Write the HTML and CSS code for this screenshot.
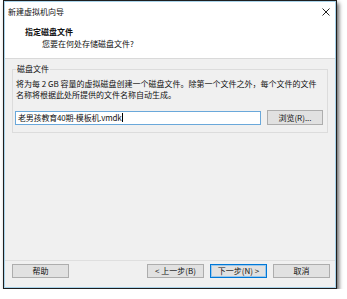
FILE: index.html
```html
<!DOCTYPE html>
<html lang="zh-CN">
<head>
  <meta charset="UTF-8">
  <title>新建虚拟机向导</title>
  <link rel="stylesheet" href="styles.css">
</head>
<body>
  <div class="window">
    <div class="inner">
      <div class="titlebar">
        <span class="title">新建虚拟机向导</span>
        <svg class="close" width="8" height="8" viewBox="0 0 8 8">
          <path d="M0.5 0.5 L7.5 7.5 M7.5 0.5 L0.5 7.5" stroke="#222" stroke-width="1" fill="none"/>
        </svg>
      </div>

      <div class="header">
        <div class="header-title">指定磁盘文件</div>
        <div class="header-sub">您要在何处存储磁盘文件?</div>
      </div>

      <div class="body">
        <fieldset class="group">
          <legend>磁盘文件</legend>
          <p class="desc">将为每 2 GB 容量的虚拟磁盘创建一个磁盘文件。除第一个文件之外，每个文件的文件<br>名称将根据此处所提供的文件名称自动生成。</p>
          <div class="file-row">
            <div class="input"><span class="value">老男孩教育40期-模板机.vmdk</span><span class="caret"></span></div>
            <button class="btn browse">浏览(R)...</button>
          </div>
        </fieldset>
      </div>

      <div class="footer">
        <button class="btn">帮助</button>
        <div class="nav">
          <button class="btn">&lt; 上一步(B)</button>
          <button class="btn primary">下一步(N) &gt;</button>
          <button class="btn">取消</button>
        </div>
      </div>
    </div>
  </div>
</body>
</html>
```

FILE: styles.css
```css
* {
  margin: 0;
  padding: 0;
  box-sizing: border-box;
}

body {
  background: #fff;
  font-family: "Noto Sans CJK SC", "Noto Sans", sans-serif;
  font-size: 8px;
  color: #111;
}

.window {
  margin-left: 3px;
  width: 334px;
  height: 289px;
  border: 1px solid #1e1e1e;
  padding: 1px;
  background: #a9d3ea;
  box-shadow: 2px 3px 4px rgba(0, 0, 0, 0.6);
}

.inner {
  height: 100%;
  display: flex;
  flex-direction: column;
  background: #f0f0f0;
}

.titlebar {
  height: 20px;
  background: #fff;
  display: flex;
  align-items: center;
  justify-content: space-between;
  padding: 0 5px 0 3px;
}

.title {
  line-height: 20px;
}

.close {
  display: block;
}

.header {
  background: #fff;
  padding: 4px 0 9px 20px;
  border-bottom: 1px solid #d9d9d9;
}

.header-title {
  font-weight: bold;
  line-height: 11px;
}

.header-sub {
  line-height: 11px;
  margin-top: 1px;
  padding-left: 17px;
}

.body {
  flex: 1;
  padding: 5px 7px 0;
}

.group {
  border: 1px solid #dcdcdc;
  padding: 0 3px 7px;
}

.group legend {
  padding: 0 1px;
  line-height: 10px;
}

.desc {
  margin-top: 4px;
  line-height: 11px;
  white-space: nowrap;
}

.file-row {
  margin-top: 10px;
  display: flex;
  align-items: center;
  gap: 6px;
}

.input {
  margin-left: -1px;
  width: 246px;
  height: 14px;
  border: 1px solid #6aa8da;
  background: #fff;
  padding-left: 2px;
  display: flex;
  align-items: center;
}

.value {
  font-size: 8px;
  line-height: 12px;
  letter-spacing: -0.2px;
}

.caret {
  width: 1px;
  height: 9px;
  background: #000;
  margin-left: 1px;
}

.btn {
  font-family: inherit;
  font-size: 8px;
  color: #111;
  width: 57px;
  height: 14px;
  line-height: 12px;
  background: #e1e1e1;
  border: 1px solid #adadad;
}

.browse {
  width: 56px;
  height: 15px;
}

.primary {
  border-color: #0078d7;
  box-shadow: inset 0 0 0 1px #9cc7ea;
}

.footer {
  border-top: 1px solid #dfdfdf;
  padding: 3px 5px 9px 7px;
  display: flex;
  justify-content: space-between;
}

.nav {
  display: flex;
  gap: 6px;
}
```
